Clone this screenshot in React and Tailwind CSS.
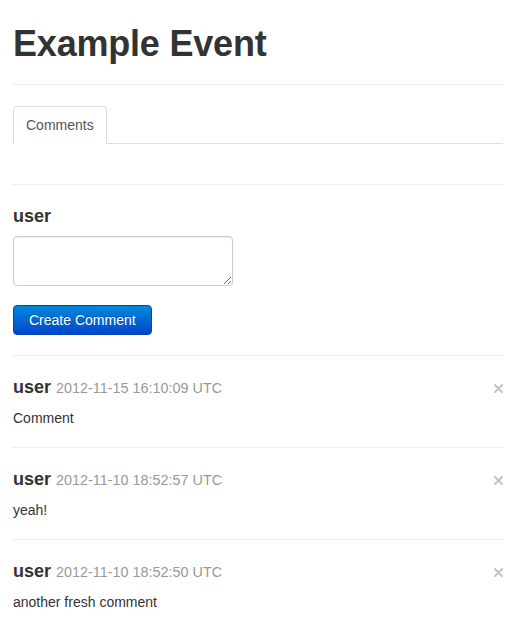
import React from "react";

const comments = [
  { user: "user", time: "2012-11-15 16:10:09 UTC", body: "Comment" },
  { user: "user", time: "2012-11-10 18:52:57 UTC", body: "yeah!" },
  { user: "user", time: "2012-11-10 18:52:50 UTC", body: "another fresh comment" },
];

function Hr() {
  return <div className="border-t border-b border-t-[#eeeeee] border-b-white" />;
}

export default function App() {
  return (
    <div className="min-h-[631px] bg-white pl-[13px] pr-[20px] pt-[24px] font-['Liberation_Sans',Arial,sans-serif] text-[14px] text-[#333333]">
      <div className="border-b border-[#eeeeee] pb-5">
        <h1 className="h-10 text-[36px] font-bold leading-[40px] tracking-[-0.2px]">Example Event</h1>
      </div>

      <div className="mt-[21px] flex border-b border-[#dddddd]">
        <div className="-mb-px rounded-t-[4px] border border-[#dddddd] border-b-transparent bg-white px-3 py-2 leading-5 text-[#555555]">
          Comments
        </div>
      </div>

      <div className="mt-10">
        <Hr />
      </div>

      <div className="pt-5">
        <h4 className="text-[18px] font-bold leading-5">user</h4>
        <textarea className="mt-[10px] block h-[50px] w-[220px] rounded-[4px] border border-[#cccccc] px-[6px] py-1 shadow-[inset_0_1px_1px_rgba(0,0,0,0.075)] outline-none" />
        <button className="mt-[19px] block h-[30px] rounded-[4px] border border-[#0044bb] bg-linear-to-b from-[#0088dd] to-[#0044cc] px-[15px] leading-5 text-white [text-shadow:0_-1px_0_rgba(0,0,0,0.25)]">
          Create Comment
        </button>
      </div>

      <div className="mt-5">
        {comments.map((c, i) => (
          <div key={i}>
            <Hr />
            <div className="pt-5 pb-[19px]">
              <div className="flex items-start justify-between">
                <h4 className="text-[18px] font-bold leading-5">
                  {c.user}{" "}
                  <span className="text-[14.4px] font-normal text-[#999999]">{c.time}</span>
                </h4>
                <svg width="9" height="9" viewBox="0 0 9 9" className="mt-[7px]">
                  <path d="M1 1L8 8M8 1L1 8" stroke="#c4c4c4" strokeWidth="2" strokeLinecap="square" />
                </svg>
              </div>
              <p className="mt-[10px] leading-5">{c.body}</p>
            </div>
          </div>
        ))}
      </div>
    </div>
  );
}
